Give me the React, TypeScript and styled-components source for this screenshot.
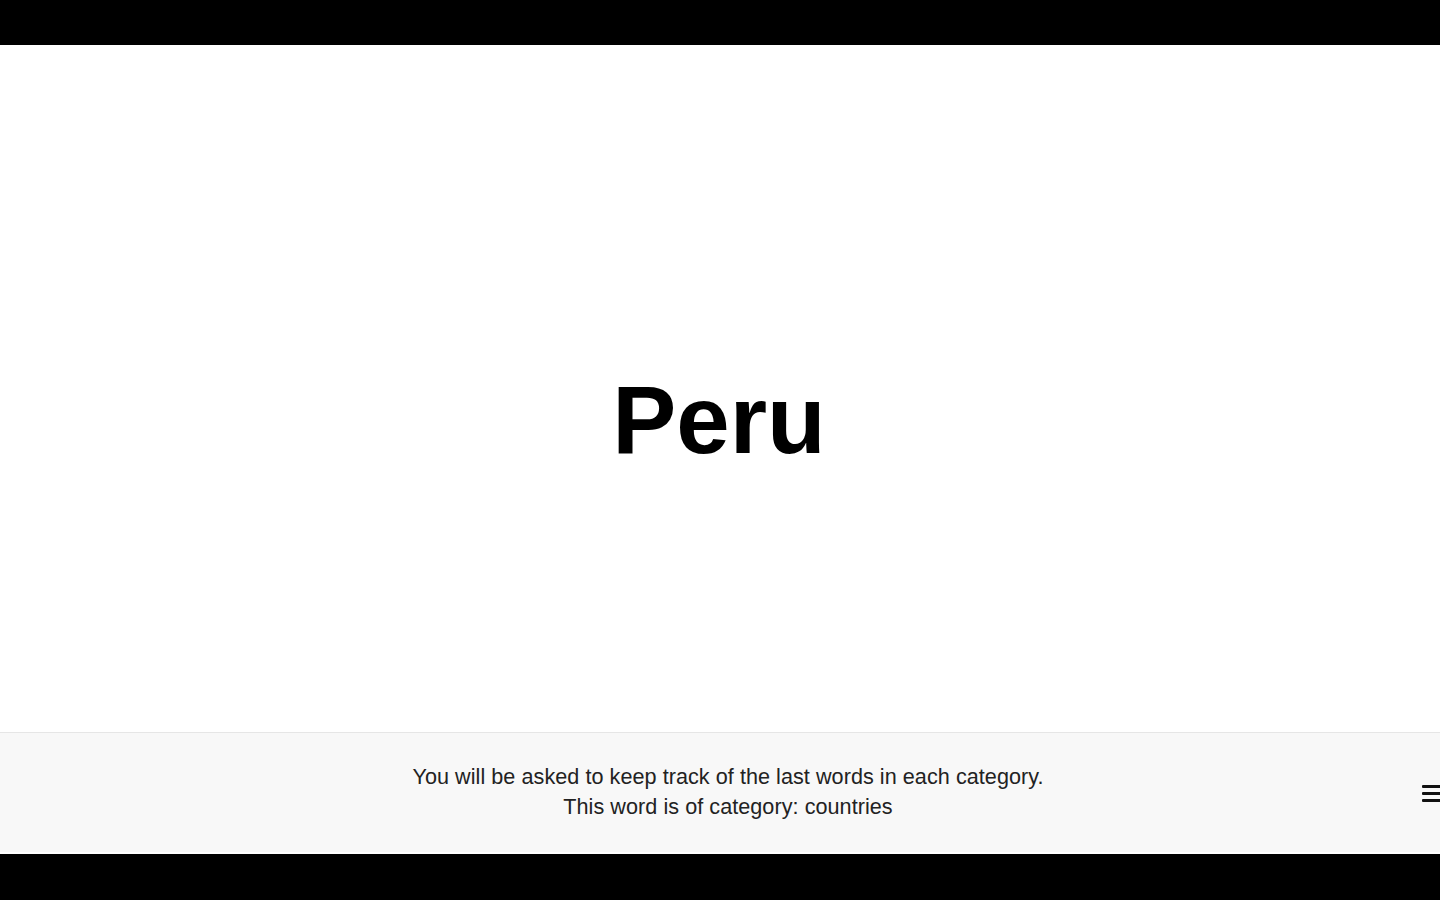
import styled, { createGlobalStyle } from 'styled-components';

const GlobalStyle = createGlobalStyle`
  html, body {
    margin: 0;
    padding: 0;
    background: #000;
  }
  body {
    font-family: 'Liberation Sans', Arial, Helvetica, sans-serif;
  }
`;

type Props = {
  word: string;
  category: string;
};

function WordScreen({ word, category }: Props) {
  return (
    <Frame>
      <Stage>
        <Word>{word}</Word>
      </Stage>
      <Footer>
        <Instructions>
          You will be asked to keep track of the last words in each category.
          <br />
          This word is of category: {category}
        </Instructions>
        <MenuButton aria-label="menu">
          <MenuLine />
          <MenuLine />
          <MenuLine />
        </MenuButton>
      </Footer>
    </Frame>
  );
}

export default function App() {
  return (
    <>
      <GlobalStyle />
      <Screen>
        <WordScreen word="Peru" category="countries" />
      </Screen>
    </>
  );
}

const Screen = styled.div`
  width: 1440px;
  height: 900px;
  padding-top: 45px;
  box-sizing: border-box;
  background: #000;
  overflow: hidden;
`;

const Frame = styled.div`
  display: flex;
  flex-direction: column;
  height: 809px;
  background: #fff;
  padding-bottom: 2px;
  box-sizing: border-box;
`;

const Stage = styled.main`
  flex: 1;
  display: flex;
  justify-content: center;
  align-items: flex-start;
  padding-top: 327px;
`;

const Word = styled.h1`
  margin: 0 0 0 -2px;
  font-size: 96px;
  line-height: 1;
  font-weight: bold;
  color: #000;
`;

const Footer = styled.footer`
  position: relative;
  height: 120px;
  border-top: 1px solid #e6e6e6;
  background: #f8f8f8;
  display: flex;
  justify-content: center;
  align-items: flex-start;
  padding-top: 29px;
  box-sizing: border-box;
`;

const Instructions = styled.p`
  margin: 0 0 0 16px;
  font-size: 21.6px;
  line-height: 30px;
  letter-spacing: 0.05px;
  color: #222;
  text-align: center;
`;

const MenuButton = styled.div`
  position: absolute;
  right: -6px;
  top: 52px;
  width: 24px;
  display: flex;
  flex-direction: column;
  gap: 4px;
`;

const MenuLine = styled.span`
  display: block;
  height: 3px;
  background: #111;
  border-radius: 1px;
`;
